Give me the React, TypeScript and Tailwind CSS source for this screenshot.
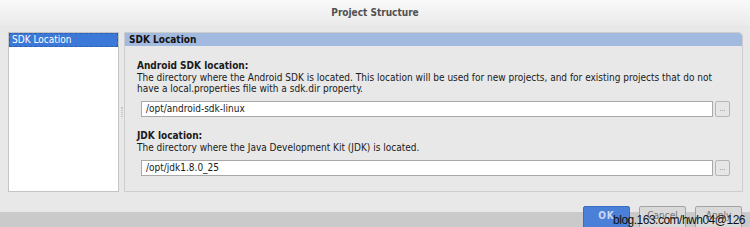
import React from "react";

function PathField({ value }: { value: string }) {
  return (
    <div className="flex items-center gap-[2px] pl-[16px] pr-[12px]">
      <div className="h-[16px] flex-1 border border-[#a9a9a9] bg-white pl-[4px] text-[10px] leading-[14px] text-[#1a1a1a]">
        {value}
      </div>
      <div className="flex h-[16px] w-[15px] items-center justify-center rounded-[2px] border border-[#b5b5b5] bg-[#e6e6e6] text-[7px] leading-none text-[#777]">
        ...
      </div>
    </div>
  );
}

function Section({ label, desc, value }: { label: string; desc: React.ReactNode; value: string }) {
  return (
    <div className="flex flex-col">
      <div className="pl-[12px] text-[10px] font-bold leading-[12px] text-[#1a1a1a]">{label}</div>
      <div className="pl-[12px] text-[10px] leading-[11px] text-[#1a1a1a]">{desc}</div>
      <div className="mt-[7px]">
        <PathField value={value} />
      </div>
    </div>
  );
}

export default function App() {
  return (
    <div
      className="flex h-[227px] w-[750px] flex-col overflow-hidden bg-[#e8e8e8]"
      style={{ fontFamily: '"DejaVu Sans Condensed", "DejaVu Sans", sans-serif' }}
    >
      {/* title bar */}
      <div className="flex h-[25px] items-center justify-center bg-gradient-to-b from-[#f9f9f9] to-[#ebebeb] text-[10px] font-bold text-[#505050]">
        Project Structure
      </div>

      <div className="flex h-[167px] pl-[8px] pr-[7px] pt-[7px]">
        {/* left list */}
        <div className="flex w-[111px] flex-col border border-[#c4c4c4] bg-white">
          <div className="h-[14px] border border-dashed border-[#2d5fb0] bg-[#3b78d8] pl-[2px] text-[10px] leading-[12px] text-white">
            SDK Location
          </div>
        </div>

        {/* splitter */}
        <div className="flex w-[5px] items-center justify-center">
          <div className="h-[10px] w-[2px] border-x border-dotted border-[#c8c8c8]" />
        </div>

        {/* right panel */}
        <div className="flex flex-1 flex-col rounded-tr-[4px] border border-[#cdcdcd]">
          <div className="h-[13px] rounded-tr-[4px] bg-[#a3bae0] pl-[4px] text-[10px] font-bold leading-[13px] text-[#111]">
            SDK Location
          </div>
          <div className="flex flex-col gap-[13px] pt-[14px]">
            <Section
              label="Android SDK location:"
              desc={
                <>
                  The directory where the Android SDK is located. This location will be used for new projects, and for existing projects that do not
                  <br />
                  have a local.properties file with a sdk.dir property.
                </>
              }
              value="/opt/android-sdk-linux"
            />
            <Section
              label="JDK location:"
              desc="The directory where the Java Development Kit (JDK) is located."
              value="/opt/jdk1.8.0_25"
            />
          </div>
        </div>
      </div>

      <div className="relative mt-[20px] flex-1 bg-[#cacaca]">
        <div className="absolute right-[8px] top-[-6px] flex gap-[9px]">
          <div className="flex h-[24px] w-[47px] items-start justify-center rounded-[2px] border border-[#3a6cc0] bg-[#4a80d8] pt-[1px] text-[10px] font-bold tracking-[1px] text-[#c9d8f0]">
            OK
          </div>
          <div className="flex h-[24px] w-[47px] items-start justify-center rounded-[2px] border border-[#a4a4a4] bg-[#d9d9d9] pt-[1px] text-[10px] text-[#777]">
            Cancel
          </div>
          <div className="flex h-[24px] w-[47px] items-start justify-center rounded-[2px] border border-[#a4a4a4] bg-[#d9d9d9] pt-[1px] text-[10px] text-[#777]">
            Apply
          </div>
        </div>
        <div
          className="absolute right-[5px] top-[1px] text-[12px] leading-[14px] tracking-[-0.5px] text-[#111]"
          style={{ fontFamily: '"Liberation Sans", Arial, sans-serif' }}
        >
          blog.163.com/hwh04@126
        </div>
      </div>
    </div>
  );
}
